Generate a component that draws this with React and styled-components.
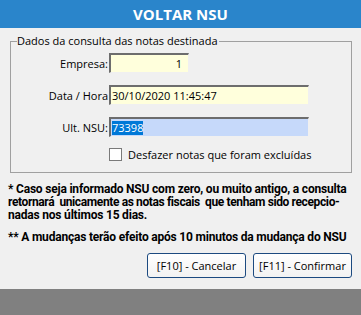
import React from 'react';
import styled, { createGlobalStyle } from 'styled-components';

const GlobalStyle = createGlobalStyle`
  html, body {
    margin: 0;
    padding: 0;
    background: #808080;
  }
  body {
    font-family: "Open Sans", sans-serif;
  }
`;

const Window = styled.div`
  width: 361px;
  height: 315px;
  display: flex;
  flex-direction: column;
  background: #808080;
`;

const TitleBar = styled.div`
  height: 28px;
  background: #2a85cb;
  color: #fff;
  font-family: "Open Sans", sans-serif;
  font-weight: bold;
  font-size: 15px;
  display: flex;
  align-items: center;
  justify-content: center;
`;

const Body = styled.div`
  height: 261px;
  background: #f0f0f0;
  padding: 0 9px 0 8px;
  box-sizing: border-box;
`;

const GroupBox = styled.fieldset`
  margin: 6px 0 0 2px;
  padding: 0;
  height: 139px;
  box-sizing: border-box;
  border: 1px solid #a0a0a0;
  border-radius: 0;
`;

const Legend = styled.legend`
  font-size: 11px;
  color: #000;
  padding: 0 1px 0 0;
  margin-left: 6px;
  line-height: 14px;
`;

const Form = styled.div`
  display: grid;
  grid-template-columns: 98px auto;
  row-gap: 12px;
  margin-top: 5px;
`;

const Label = styled.div`
  font-size: 11px;
  color: #000;
  padding-right: 1px;
  display: flex;
  align-items: center;
  justify-content: flex-end;
  height: 20px;
`;

const Input = styled.div`
  width: ${p => p.$width}px;
  height: 20px;
  box-sizing: border-box;
  border-top: 2px solid #6d6d6d;
  border-left: 2px solid #6d6d6d;
  border-right: 1px solid #f0f0f0;
  border-bottom: 1px solid #f0f0f0;
  background: ${p => (p.$focused ? '#c6d9fa' : '#ffffdc')};
  font-size: 11px;
  color: #000;
  display: flex;
  align-items: center;
  justify-content: ${p => (p.$right ? 'flex-end' : 'flex-start')};
  padding: 0 6px 0 1px;
`;

const Selected = styled.span`
  background: #0078d7;
  color: #fff;
  line-height: 14px;
`;

const CheckRow = styled.label`
  grid-column: 2;
  display: flex;
  align-items: center;
  gap: 6px;
  font-size: 11px;
  color: #000;
  margin-top: -2px;
`;

const CheckBox = styled.span`
  width: 11px;
  height: 11px;
  border: 1px solid #7a7a7a;
  background: #fff;
  display: inline-block;
`;

const Notes = styled.div`
  margin-top: 10px;
  font-family: Roboto, sans-serif;
  font-weight: bold;
  font-size: 12px;
  line-height: 13px;
  color: #000;
  white-space: nowrap;
`;

const Note = styled.p`
  margin: 0 0 9px 0;
`;

const Line = styled.span`
  display: block;
  letter-spacing: ${p => p.$spacing ?? -0.2}px;
`;

const Buttons = styled.div`
  display: flex;
  justify-content: flex-end;
  gap: 7px;
  margin-top: 8px;
`;

const Button = styled.button`
  width: 99px;
  height: 25px;
  border: 1px solid #1c4a80;
  border-radius: 3px;
  background: linear-gradient(#ffffff, #f2f2f2);
  font-family: "Open Sans", sans-serif;
  font-size: 11px;
  color: #000;
  padding: 0;
`;

export default function App() {
  return (
    <>
      <GlobalStyle />
      <Window>
        <TitleBar>VOLTAR NSU</TitleBar>
        <Body>
          <GroupBox>
            <Legend>Dados da consulta das notas destinada</Legend>
            <Form>
              <Label>Empresa:</Label>
              <Input $width={80} $right>1</Input>
              <Label>Data / Hora</Label>
              <Input $width={200}>30/10/2020 11:45:47</Input>
              <Label>Ult. NSU:</Label>
              <Input $width={200} $focused><Selected>73398</Selected></Input>
              <CheckRow>
                <CheckBox />
                Desfazer notas que foram excluídas
              </CheckRow>
            </Form>
          </GroupBox>
          <Notes>
            <Note>
              <Line>* Caso seja informado NSU com zero, ou muito antigo, a consulta</Line>
              <Line $spacing={-0.38}>retornará&nbsp; unicamente as notas fiscais&nbsp; que tenham sido recepcio-</Line>
              <Line>nadas nos últimos 15 dias.</Line>
            </Note>
            <Note>
              <Line>** A mudanças terão efeito após 10 minutos da mudança do NSU</Line>
            </Note>
          </Notes>
          <Buttons>
            <Button>[F10] - Cancelar</Button>
            <Button>[F11] - Confirmar</Button>
          </Buttons>
        </Body>
      </Window>
    </>
  );
}
